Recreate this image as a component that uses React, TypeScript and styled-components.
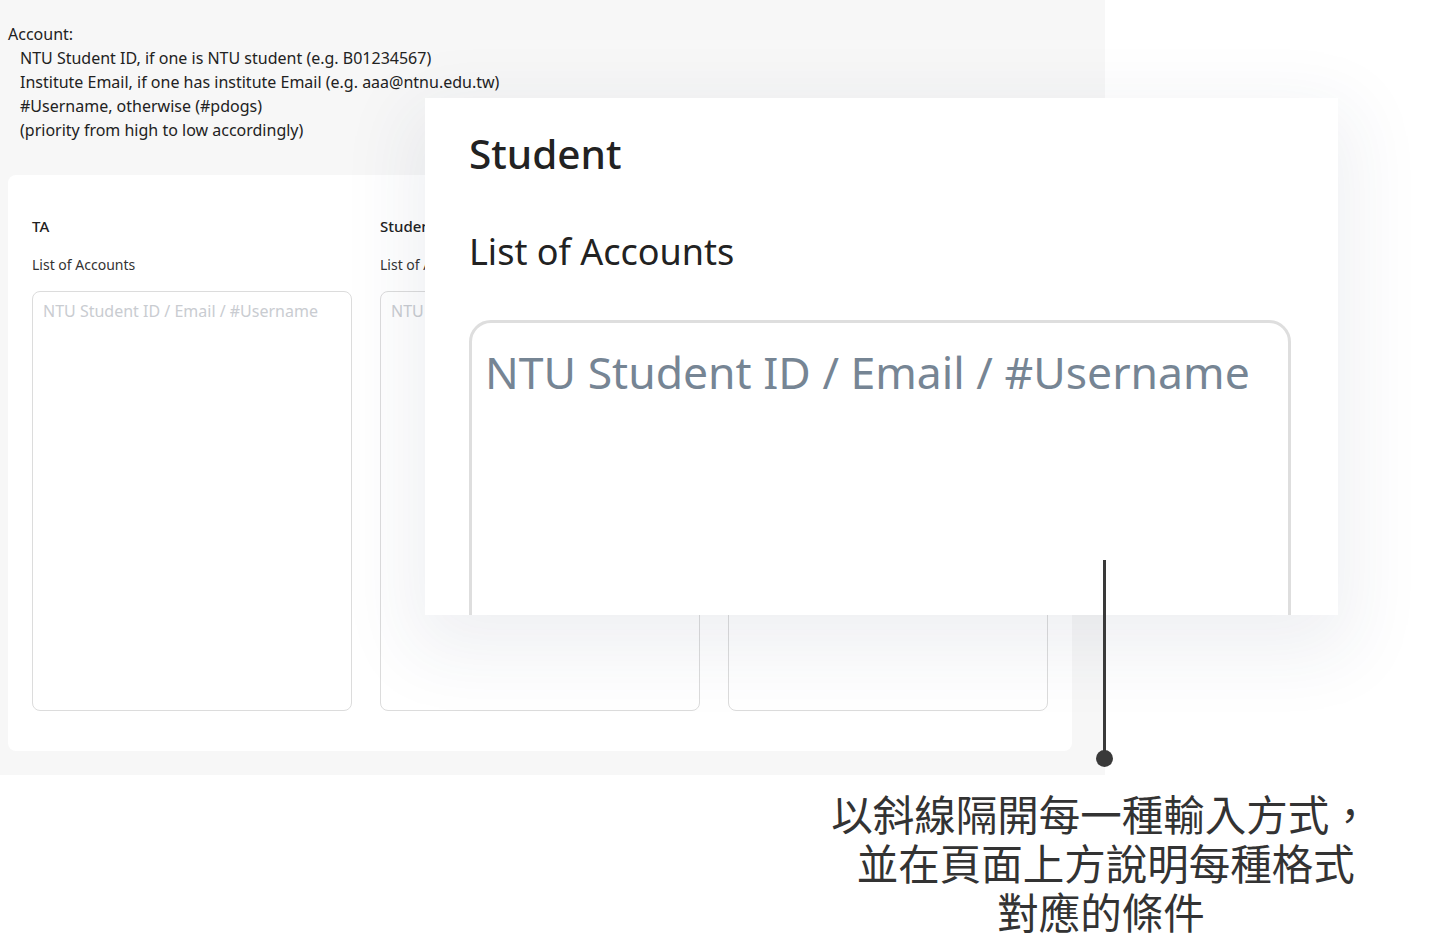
import React from "react";
import styled, { createGlobalStyle } from "styled-components";

const GlobalStyle = createGlobalStyle`
  html, body { margin: 0; padding: 0; background: #ffffff; }
  body { font-family: "Noto Sans", "Open Sans", sans-serif; color: #222; }
  * { box-sizing: border-box; }
`;

const Canvas = styled.div`
  position: relative;
  width: 1449px;
  height: 939px;
  overflow: hidden;
  background: #ffffff;
`;

const Screenshot = styled.div`
  width: 1105px;
  height: 775px;
  background: #f7f7f7;
  padding: 22px 0 0 8px;
  display: flex;
  flex-direction: column;
`;

const Info = styled.div`
  font-size: 16px;
  line-height: 24px;
  color: #222;
`;

const InfoLine = styled.div<{ $indent?: boolean }>`
  padding-left: ${(p) => (p.$indent ? "12px" : "0")};
`;

const Card = styled.div`
  margin-top: 33px;
  width: 1064px;
  background: #ffffff;
  border-radius: 8px;
  padding: 41px 24px 40px;
  display: grid;
  grid-template-columns: repeat(3, 320px);
  column-gap: 28px;
`;

const Column = styled.div`
  display: flex;
  flex-direction: column;
`;

const ColTitle = styled.div`
  font-size: 15px;
  line-height: 20px;
  font-weight: 500;
  color: #222;
`;

const ColLabel = styled.div`
  margin-top: 20px;
  font-size: 14px;
  line-height: 18px;
  color: #333;
`;

const Area = styled.textarea`
  margin-top: 17px;
  width: 320px;
  height: 420px;
  resize: none;
  border: 1.5px solid #dcdcdc;
  border-radius: 8px;
  padding: 8px 10px;
  font-family: "Noto Sans", sans-serif;
  font-size: 16px;
  line-height: 22px;
  background: transparent;
  outline: none;
  &::placeholder { color: #c9ccd1; }
`;

const Zoom = styled.div`
  position: absolute;
  left: 425px;
  top: 98px;
  width: 913px;
  height: 517px;
  background: #ffffff;
  overflow: hidden;
  padding: 30px 46px 0 44px;
  display: flex;
  flex-direction: column;
  box-shadow: 0 24px 70px 14px rgba(40, 55, 95, 0.075);
`;

const ZoomTitle = styled.div`
  font-size: 40.5px;
  line-height: 52px;
  font-weight: 500;
  color: #222;
`;

const ZoomLabel = styled.div`
  margin-top: 50px;
  font-size: 36px;
  line-height: 44px;
  color: #222;
`;

const ZoomArea = styled.textarea`
  margin-top: 46px;
  width: 822px;
  height: 460px;
  flex-shrink: 0;
  resize: none;
  border: 3px solid #dedede;
  border-radius: 22px;
  padding: 19px 13px;
  font-family: "Noto Sans", sans-serif;
  font-size: 44.5px;
  line-height: 60px;
  background: transparent;
  outline: none;
  &::placeholder { color: #768594; }
`;

const Leader = styled.div`
  position: absolute;
  left: 1103px;
  top: 560px;
  width: 3px;
  height: 198px;
  background: #3a3a3a;
`;

const Dot = styled.div`
  position: absolute;
  left: 1096px;
  top: 750px;
  width: 17px;
  height: 17px;
  border-radius: 50%;
  background: #3a3a3a;
`;

const Caption = styled.div`
  position: absolute;
  left: 781px;
  top: 789px;
  width: 640px;
  text-align: center;
  white-space: pre;
  font-family: "Noto Sans CJK TC", "Noto Sans CJK SC", sans-serif;
  font-size: 41.5px;
  line-height: 49px;
  color: #333;
`;

const columns = ["TA", "Student", "Auditor"];
const placeholder = "NTU Student ID / Email / #Username";

export default function App() {
  return (
    <>
      <GlobalStyle />
      <Canvas>
        <Screenshot>
          <Info>
            <InfoLine>Account:</InfoLine>
            <InfoLine $indent>NTU Student ID, if one is NTU student (e.g. B01234567)</InfoLine>
            <InfoLine $indent>Institute Email, if one has institute Email (e.g. aaa@ntnu.edu.tw)</InfoLine>
            <InfoLine $indent>#Username, otherwise (#pdogs)</InfoLine>
            <InfoLine $indent>(priority from high to low accordingly)</InfoLine>
          </Info>
          <Card>
            {columns.map((c) => (
              <Column key={c}>
                <ColTitle>{c}</ColTitle>
                <ColLabel>List of Accounts</ColLabel>
                <Area readOnly placeholder={placeholder} />
              </Column>
            ))}
          </Card>
        </Screenshot>
        <Zoom>
          <ZoomTitle>Student</ZoomTitle>
          <ZoomLabel>List of Accounts</ZoomLabel>
          <ZoomArea readOnly placeholder={placeholder} />
        </Zoom>
        <Leader />
        <Dot />
        <Caption>
          {"以斜線隔開每一種輸入方式，\n 並在頁面上方說明每種格式\n對應的條件"}
        </Caption>
      </Canvas>
    </>
  );
}
